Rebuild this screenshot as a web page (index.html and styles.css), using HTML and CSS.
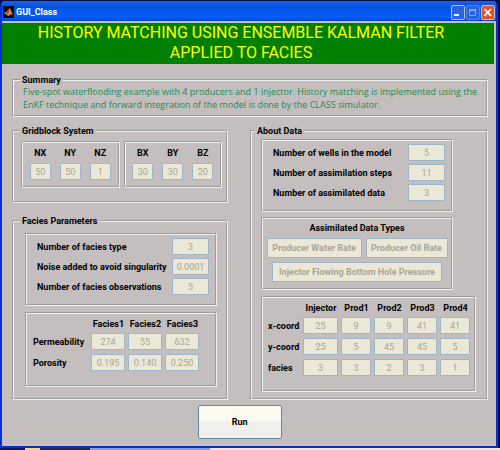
FILE: index.html
```html
<!DOCTYPE html>
<html lang="en">
<head>
    <meta charset="UTF-8">
    <meta name="viewport" content="width=device-width, initial-scale=1.0">
    <title>GUI_Class</title>
    <link rel="stylesheet" href="styles.css">
</head>
<body>
    <div class="window">
        <header class="titlebar">
            <svg class="app-icon" viewBox="0 0 11 12" aria-hidden="true">
                <rect width="11" height="12" fill="#0a0a18"/>
                <path d="M1 7 L3.5 5.5 L5 6.5 L3.5 9 Z" fill="#5aa0c8"/>
                <path d="M3.5 5.5 L6.5 2 L6 7 L3.5 9 Z" fill="#b03a1a"/>
                <path d="M6.5 2 Q7.5 2.5 10 9.5 L8 8 L5.5 10 L3.5 9 L5.5 6.5 Z" fill="#f08030"/>
            </svg>
            <span class="app-name">GUI_Class</span>
            <div class="controls">
                <button type="button" class="control" aria-label="Minimize">
                    <svg viewBox="0 0 12 13"><rect x="2" y="8" width="5" height="2" fill="#fff"/></svg>
                </button>
                <button type="button" class="control inactive" aria-label="Maximize" disabled>
                    <svg viewBox="0 0 12 13"><path d="M2.5 3.5 H8.5 V9.5 H2.5 Z M2.5 4.5 H8.5" fill="none" stroke="#7ba4f5"/></svg>
                </button>
                <button type="button" class="control close" aria-label="Close">
                    <svg viewBox="0 0 12 13"><path d="M2.5 3 L9 9.8 M9 3 L2.5 9.8" stroke="#fff" stroke-width="1.8"/></svg>
                </button>
            </div>
        </header>

        <h1>HISTORY MATCHING USING ENSEMBLE KALMAN FILTER<br>APPLIED TO FACIES</h1>

        <main>
            <fieldset class="summary">
                <legend>Summary</legend>
                <p>Five-spot waterflooding example with 4 producers and 1 injector. History matching is implemented using the EnKF technique and forward integration of the model is done by the CLASS simulator.</p>
            </fieldset>

            <div class="columns">
                <div class="left">
                    <fieldset class="gridblock">
                        <legend>Gridblock System</legend>
                        <div class="pair">
                            <div class="panel triple">
                                <label>NX <input type="text" value="50" disabled></label>
                                <label>NY <input type="text" value="50" disabled></label>
                                <label>NZ <input type="text" value="1" disabled></label>
                            </div>
                            <div class="panel triple">
                                <label>BX <input type="text" value="30" disabled></label>
                                <label>BY <input type="text" value="30" disabled></label>
                                <label>BZ <input type="text" value="20" disabled></label>
                            </div>
                        </div>
                    </fieldset>

                    <fieldset class="facies">
                        <legend>Facies Parameters</legend>
                        <div class="panel rows">
                            <label>Number of facies type <input type="text" value="3" disabled></label>
                            <label>Noise added to avoid singularity <input type="text" value="0.0001" disabled></label>
                            <label>Number of facies observations <input type="text" value="5" disabled></label>
                        </div>
                        <div class="panel rock">
                            <table>
                                <thead>
                                    <tr><td></td><th>Facies1</th><th>Facies2</th><th>Facies3</th></tr>
                                </thead>
                                <tbody>
                                    <tr>
                                        <th>Permeability</th>
                                        <td><input type="text" value="274" aria-label="Permeability Facies1" disabled></td>
                                        <td><input type="text" value="55" aria-label="Permeability Facies2" disabled></td>
                                        <td><input type="text" value="632" aria-label="Permeability Facies3" disabled></td>
                                    </tr>
                                    <tr>
                                        <th>Porosity</th>
                                        <td><input type="text" value="0.195" aria-label="Porosity Facies1" disabled></td>
                                        <td><input type="text" value="0.140" aria-label="Porosity Facies2" disabled></td>
                                        <td><input type="text" value="0.250" aria-label="Porosity Facies3" disabled></td>
                                    </tr>
                                </tbody>
                            </table>
                        </div>
                    </fieldset>
                </div>

                <fieldset class="about">
                    <legend>About Data</legend>
                    <div class="panel rows">
                        <label>Number of wells in the model <input type="text" value="5" disabled></label>
                        <label>Number of assimilation steps <input type="text" value="11" disabled></label>
                        <label>Number of assimilated data <input type="text" value="3" disabled></label>
                    </div>
                    <div class="panel types">
                        <h2>Assimilated Data Types</h2>
                        <input type="text" value="Producer Water Rate" aria-label="Data type 1" disabled>
                        <input type="text" value="Producer Oil Rate" aria-label="Data type 2" disabled>
                        <input type="text" class="pressure" value="Injector Flowing Bottom Hole Pressure" aria-label="Data type 3" disabled>
                    </div>
                    <div class="panel wells">
                        <table>
                            <thead>
                                <tr><td></td><th>Injector</th><th>Prod1</th><th>Prod2</th><th>Prod3</th><th>Prod4</th></tr>
                            </thead>
                            <tbody>
                                <tr>
                                    <th>x-coord</th>
                                    <td><input type="text" value="25" aria-label="x-coord Injector" disabled></td>
                                    <td><input type="text" value="9" aria-label="x-coord Prod1" disabled></td>
                                    <td><input type="text" value="9" aria-label="x-coord Prod2" disabled></td>
                                    <td><input type="text" value="41" aria-label="x-coord Prod3" disabled></td>
                                    <td><input type="text" value="41" aria-label="x-coord Prod4" disabled></td>
                                </tr>
                                <tr>
                                    <th>y-coord</th>
                                    <td><input type="text" value="25" aria-label="y-coord Injector" disabled></td>
                                    <td><input type="text" value="5" aria-label="y-coord Prod1" disabled></td>
                                    <td><input type="text" value="45" aria-label="y-coord Prod2" disabled></td>
                                    <td><input type="text" value="45" aria-label="y-coord Prod3" disabled></td>
                                    <td><input type="text" value="5" aria-label="y-coord Prod4" disabled></td>
                                </tr>
                                <tr>
                                    <th>facies</th>
                                    <td><input type="text" value="3" aria-label="facies Injector" disabled></td>
                                    <td><input type="text" value="3" aria-label="facies Prod1" disabled></td>
                                    <td><input type="text" value="2" aria-label="facies Prod2" disabled></td>
                                    <td><input type="text" value="3" aria-label="facies Prod3" disabled></td>
                                    <td><input type="text" value="1" aria-label="facies Prod4" disabled></td>
                                </tr>
                            </tbody>
                        </table>
                    </div>
                </fieldset>
            </div>

            <button type="button" class="run">Run</button>
        </main>
    </div>
    <div class="taskbar"></div>
</body>
</html>
```
FILE: styles.css
```css
* {
    box-sizing: border-box;
}
body {
    margin: 0;
    padding-top: 1px;
    background-color: #06104a;
    color: #000;
    font-family: Roboto, "Liberation Sans", Arial, sans-serif;
    font-size: 9px;
    line-height: 10px;
}
.window {
    margin-right: 2px;
    border: 2px solid #0a2fd0;
    border-top: 0;
    border-radius: 5px 5px 0 0;
    background-color: #c4bfbe;
    overflow: hidden;
}

/* title bar */
.titlebar {
    display: flex;
    align-items: center;
    height: 20px;
    padding: 2px 1px 0;
    background: linear-gradient(#1a62e8, #0353e4 30%, #0560f8 80%, #0344c8);
}
.app-icon {
    width: 11px;
    height: 12px;
}
.app-name {
    flex: 1;
    margin-left: 2px;
    color: #fff;
    font-weight: bold;
}
.controls {
    display: flex;
    gap: 1px;
}
.control {
    width: 14px;
    height: 15px;
    padding: 0;
    border: 1px solid #a8c4ff;
    border-radius: 2px;
    background-color: #2a62e0;
}
.control svg {
    display: block;
    width: 100%;
    height: 100%;
}
.control.inactive {
    border-color: #4f84ee;
}
.control.close {
    background-color: #e2532c;
}

h1 {
    margin: 2px 2px 0 0;
    padding: 0 14px 1px 0;
    background-color: #008000;
    color: #ff0;
    font-size: 16px;
    font-weight: normal;
    line-height: 20px;
    text-align: center;
}

/* panels */
main {
    padding: 11px 8px 7px 10px;
}
fieldset {
    min-width: 0;
    margin: 0;
    padding: 0;
    border: 2px groove #f0f0f0;
}
legend {
    margin-left: 6px;
    padding: 0 2px;
    font-weight: bold;
}
.panel {
    border: 2px groove #f0f0f0;
    font-weight: bold;
}
.summary p {
    margin: 0 4px 4px 9px;
    color: #1b8a50;
    font-family: "Open Sans", "Liberation Sans", Arial, sans-serif;
    font-size: 9px;
    line-height: 13px;
}
.columns {
    display: grid;
    grid-template-columns: minmax(0, 216fr) minmax(0, 238fr);
    gap: 22px;
    margin-top: 9px;
}
input {
    display: block;
    width: 100%;
    height: 17px;
    padding: 0;
    border: 1px solid #9db5c8;
    border-radius: 1px;
    background-color: #ece8d8;
    color: #a8a595;
    font: 9px Roboto, "Liberation Sans", Arial, sans-serif;
    text-align: center;
}

.gridblock {
    padding: 5px 0 13px;
}
.pair {
    display: grid;
    grid-template-columns: 1fr 1fr;
    gap: 4px;
    margin: 0 4px 0 7px;
}
.triple {
    display: grid;
    grid-template-columns: repeat(3, 21px);
    justify-content: center;
    gap: 9px;
    padding: 5px 0 6px;
    text-align: center;
}
.triple input {
    margin-top: 5px;
}

.rows {
    display: grid;
    gap: 3px;
    padding: 3px 6px 9px 10px;
}
.rows label {
    display: flex;
    align-items: center;
    justify-content: space-between;
    white-space: nowrap;
}
.rows input {
    flex: none;
    width: 37px;
}
.facies {
    margin-top: 13px;
    padding: 7px 0 11px;
}
.facies .panel {
    margin-right: 9px;
    margin-left: 11px;
}

table {
    width: 100%;
    border-collapse: collapse;
    table-layout: fixed;
}
th, td {
    padding: 0 2px 4px 1px;
}
tbody th {
    padding-left: 0;
    text-align: left;
    white-space: nowrap;
}
thead th {
    padding: 0 0 4px;
}
.rock {
    margin-top: 6px;
    padding: 5px 14px 10px 6px;
}
.rock tr > :first-child {
    width: 57px;
}

.about {
    padding: 3px 0 6px;
}
.about legend {
    margin-left: 3px;
}
.about .panel {
    margin-right: 33px;
    margin-left: 9px;
}
.types {
    display: grid;
    grid-template-columns: 95px 82px;
    justify-content: center;
    gap: 4px;
    margin-top: 5px;
    padding: 4px 0 6px;
}
.types h2 {
    grid-column: 1 / 3;
    margin: 0 0 1px;
    font-size: 9px;
    text-align: center;
}
.types input {
    height: 20px;
    font-weight: bold;
}
.types .pressure {
    grid-column: 1 / 3;
    justify-self: center;
    width: 170px;
}
.about .wells {
    margin-top: 6px;
    margin-right: 10px;
    padding: 5px 2px 10px 5px;
}
.wells tr > :first-child {
    width: 34px;
}
.wells tr > :nth-child(2) {
    width: 38px;
}

.run {
    display: block;
    width: 84px;
    height: 34px;
    margin: 5px 0 0 39%;
    border: 1px solid #5f8aa8;
    border-radius: 2px;
    background: linear-gradient(#fbfaf0 45%, #efefec 50%);
    color: #000;
    font: bold 9px Roboto, "Liberation Sans", Arial, sans-serif;
}
.taskbar {
    height: 2px;
    background: linear-gradient(90deg, #0a1a60 5%, #e8e070 5% 8%, #1a2a50 8% 18%, #7ba4e8 18% 42%, #e8e8e8 42%);
}
```
